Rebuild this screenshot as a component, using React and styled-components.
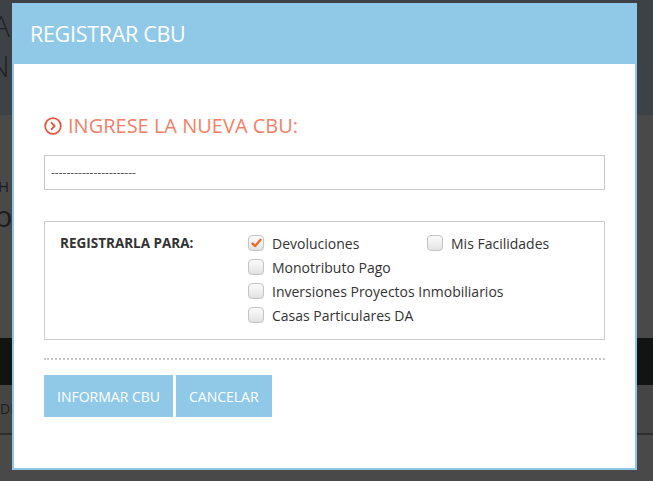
import React from 'react';
import styled, { createGlobalStyle } from 'styled-components';

const GlobalStyle = createGlobalStyle`
  html, body {
    margin: 0;
    padding: 0;
    height: 100%;
    background: #4a4a4a;
    font-family: "Open Sans", "Liberation Sans", sans-serif;
  }
  * { box-sizing: border-box; }
`;

// page behind the dialog
const Page = styled.div`
  position: relative;
  width: 653px;
  height: 481px;
  overflow: hidden;
  background: #494949;
`;

const Hero = styled.div`
  height: 115px;
  background: #3d4246;
  padding-top: 6px;
  color: #1d2226;
  font-size: 30px;
  line-height: 40px;
  font-weight: 300;
`;

const HeroLine = styled.div`
  margin-left: ${p => p.$shift}px;
`;

const Section = styled.div`
  height: 223px;
  padding-top: 60px;
  color: #1c1c1c;
`;

const SmallHead = styled.div`
  font-size: 15px;
  line-height: 22px;
  margin-left: -2px;
`;

const BigHead = styled.div`
  font-size: 30px;
  line-height: 38px;
  margin-left: -6px;
`;

const DarkBand = styled.div`
  height: 47px;
  background: #111412;
`;

const TabRow = styled.div`
  height: 50px;
  padding-top: 14px;
  font-size: 14px;
  color: #1e1e1e;
  border-bottom: 2px solid #2e2e2e;
  background: #454545;
`;

const Modal = styled.div`
  position: absolute;
  left: 12px;
  top: 3px;
  width: 625px;
  height: 467px;
  background: #fff;
  border: 2px solid #8ec6e4;
  border-top: none;
  display: flex;
  flex-direction: column;
`;

const Header = styled.div`
  height: 61px;
  margin: 0 -2px;
  background: #90c9e8;
  color: #fff;
  font-size: 21.5px;
  font-weight: 400;
  display: flex;
  align-items: center;
  padding-left: 18px;
  letter-spacing: -0.3px;
`;

const Body = styled.div`
  padding: 50px 30px 0 30px;
`;

const Title = styled.div`
  display: flex;
  align-items: center;
  gap: 6px;
  color: #f47f66;
  font-size: 20px;
  height: 24px;
  line-height: 24px;
`;

const CbuInput = styled.input`
  display: block;
  margin-top: 17px;
  width: 100%;
  height: 35px;
  border: 1px solid #c6c8ca;
  padding: 0 6px;
  font-family: "Open Sans", "Liberation Sans", sans-serif;
  font-size: 12px;
  color: #555;
  outline: none;
  &::placeholder { color: #555; }
`;

const Box = styled.div`
  margin-top: 31px;
  border: 1px solid #cccccc;
  padding: 9px 15px 12px 15px;
  display: flex;
`;

const BoxLabel = styled.div`
  width: 188px;
  font-size: 13.5px;
  font-weight: 700;
  color: #333;
  line-height: 24px;
`;

const Options = styled.div`
  display: grid;
  grid-template-columns: 179px auto;
`;

const Option = styled.label`
  display: flex;
  align-items: center;
  gap: 8px;
  height: 24px;
  font-size: 14px;
  color: #333;
  grid-column: ${p => (p.$wide ? '1 / span 2' : 'auto')};
  white-space: nowrap;
`;

const Box16 = styled.span`
  width: 16px;
  height: 16px;
  border: 1px solid #c4c4c4;
  border-radius: 4px;
  background: linear-gradient(#fbfbfb, #e3e3e3);
  display: flex;
  align-items: center;
  justify-content: center;
`;

const Divider = styled.div`
  margin-top: 18px;
  border-top: 2px dotted #c8c8c8;
`;

const Actions = styled.div`
  margin-top: 15px;
  display: flex;
  gap: 3px;
`;

const Button = styled.button`
  height: 42px;
  padding: 0 13px;
  border: none;
  background: #90c9e8;
  color: #fff;
  font-family: "Open Sans", "Liberation Sans", sans-serif;
  font-size: 14px;
`;

const Check = ({ checked }) => (
  <Box16>
    {checked && (
      <svg width="11" height="10" viewBox="0 0 11 10">
        <path d="M1.5 5.5 L4.2 8 L9.5 1.8" fill="none" stroke="#e2712f" strokeWidth="2.4" strokeLinecap="round" strokeLinejoin="round" />
      </svg>
    )}
  </Box16>
);

const CircleArrow = () => (
  <svg width="18" height="18" viewBox="0 0 18 18">
    <circle cx="9" cy="9" r="7.8" fill="none" stroke="#e2593d" strokeWidth="1.8" />
    <path d="M7.6 5.8 L10.6 9 L7.6 12.2" fill="none" stroke="#e2593d" strokeWidth="1.9" strokeLinecap="round" strokeLinejoin="round" />
  </svg>
);

export default function App() {
  return (
    <Page>
      <GlobalStyle />
      <Hero>
        <HeroLine $shift={-8}>A</HeroLine>
        <HeroLine $shift={-12}>N</HeroLine>
      </Hero>
      <Section>
        <SmallHead>H</SmallHead>
        <BigHead>bi</BigHead>
      </Section>
      <DarkBand />
      <TabRow>DE</TabRow>

      <Modal>
        <Header>REGISTRAR CBU</Header>
        <Body>
          <Title>
            <CircleArrow />
            INGRESE LA NUEVA CBU:
          </Title>
          <CbuInput placeholder="----------------------" />
          <Box>
            <BoxLabel>REGISTRARLA PARA:</BoxLabel>
            <Options>
              <Option><Check checked />Devoluciones</Option>
              <Option><Check />Mis Facilidades</Option>
              <Option $wide><Check />Monotributo Pago</Option>
              <Option $wide><Check />Inversiones Proyectos Inmobiliarios</Option>
              <Option $wide><Check />Casas Particulares DA</Option>
            </Options>
          </Box>
          <Divider />
          <Actions>
            <Button>INFORMAR CBU</Button>
            <Button>CANCELAR</Button>
          </Actions>
        </Body>
      </Modal>
    </Page>
  );
}
